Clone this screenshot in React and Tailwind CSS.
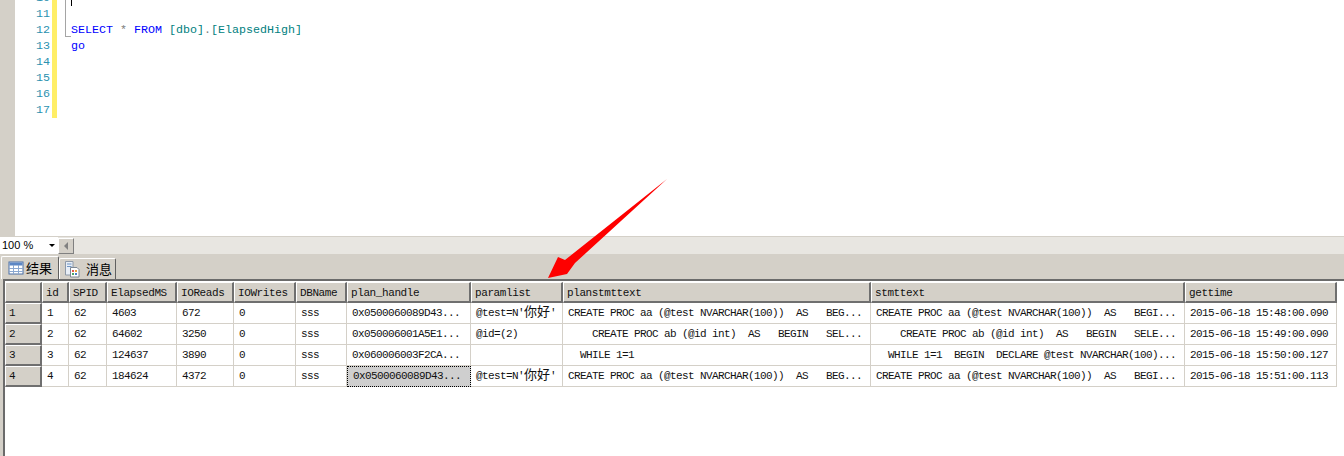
const mono = "font-['Liberation_Mono','Noto_Sans_CJK_SC',monospace]";

const columns = [
  { name: "id", width: "w-[27px]" },
  { name: "SPID", width: "w-[38px]" },
  { name: "ElapsedMS", width: "w-[70px]" },
  { name: "IOReads", width: "w-[57px]" },
  { name: "IOWrites", width: "w-[62px]" },
  { name: "DBName", width: "w-[51px]" },
  { name: "plan_handle", width: "w-[124px]" },
  { name: "paramlist", width: "w-[92px]" },
  { name: "planstmttext", width: "w-[308px]" },
  { name: "stmttext", width: "w-[314px]" },
  { name: "gettime", width: "w-[152px]" },
];

const hello = (
  <>
    @test=N'<span className="text-[13px] tracking-normal leading-none">你好</span>'
  </>
);

const rows = [
  ["1", "62", "4603", "672", "0", "sss", "0x0500060089D43...", hello, "CREATE PROC aa (@test NVARCHAR(100))  AS   BEG...", "CREATE PROC aa (@test NVARCHAR(100))  AS   BEGI...", "2015-06-18 15:48:00.090"],
  ["2", "62", "64602", "3250", "0", "sss", "0x050006001A5E1...", "@id=(2)", "    CREATE PROC ab (@id int)  AS   BEGIN   SEL...", "    CREATE PROC ab (@id int)  AS   BEGIN   SELE...", "2015-06-18 15:49:00.090"],
  ["3", "62", "124637", "3890", "0", "sss", "0x060006003F2CA...", "", "  WHILE 1=1", "  WHILE 1=1  BEGIN  DECLARE @test NVARCHAR(100)...", "2015-06-18 15:50:00.127"],
  ["4", "62", "184624", "4372", "0", "sss", "0x0500060089D43...", hello, "CREATE PROC aa (@test NVARCHAR(100))  AS   BEG...", "CREATE PROC aa (@test NVARCHAR(100))  AS   BEGI...", "2015-06-18 15:51:00.113"],
];

const bevel = "border-t border-l border-r-2 border-b-2 border-t-white border-l-white border-r-[#6f6f6f] border-b-[#6f6f6f] bg-[#d4d0c8]";

function TableIcon() {
  return (
    <svg width="16" height="14" viewBox="0 0 16 14" className="shrink-0">
      <rect x="1" y="1" width="14" height="12" fill="#fff" stroke="#4a6fa5" />
      <rect x="1.5" y="1.5" width="13" height="3" fill="#5b86c4" />
      <path d="M1 7.5H15M1 10.5H15M5.5 4V13M10.5 4V13" stroke="#8aa7d0" fill="none" />
    </svg>
  );
}

function MessageIcon() {
  return (
    <svg width="16" height="18" viewBox="0 0 16 18" className="shrink-0">
      <path d="M1.5 1.5H9V15H1.5Z" fill="#e8eef6" stroke="#8d99a8" />
      <path d="M3 4H7.5M3 6.5H7.5" stroke="#6f95c4" />
      <path d="M6.5 7.5H13L15 9.5V17H6.5Z" fill="#fff" stroke="#7c8794" />
      <rect x="8" y="10" width="2" height="2" fill="#e2574c" />
      <rect x="11" y="10" width="2" height="2" fill="#e9a23b" />
      <rect x="8" y="13" width="2" height="2" fill="#4aa564" />
      <rect x="11" y="13" width="2" height="2" fill="#4c7fc4" />
    </svg>
  );
}

function Editor() {
  const lines = ["10", "11", "12", "13", "14", "15", "16", "17"];
  return (
    <div className="flex h-[236px] bg-white overflow-hidden">
      <div className="w-[15px] bg-[#d4d0c8]" />
      <div className="w-[37px] -mt-[10px] text-right text-[#2b91af] text-[11.67px] leading-[16px]">
        {lines.map((n) => (
          <div key={n} className="pr-[2px]">{n}</div>
        ))}
      </div>
      <div className="w-[5px] h-[118px] bg-[#ffee66]" />
      <div className="relative pl-[14px] pt-[22px] text-[11.67px] leading-[16px] whitespace-pre">
        <div className="absolute left-[8px] top-0 h-[37px] w-[6px] border-l border-b border-[#a5a5a5]" />
        <div className="absolute left-[14px] top-0 h-[6px] w-px bg-black" />
        <div>
          <span className="text-[#0000ff]">SELECT</span>
          <span className="text-[#808080]"> * </span>
          <span className="text-[#0000ff]">FROM</span>
          <span className="text-[#008080]"> [dbo]</span>
          <span className="text-[#808080]">.</span>
          <span className="text-[#008080]">[ElapsedHigh]</span>
        </div>
        <div className="text-[#0000ff]">go</div>
      </div>
    </div>
  );
}

function StatusBar() {
  return (
    <div className="flex h-[18px] items-center bg-[#e8e6e1] border-t border-[#d4d0c8]">
      <div className="flex h-[17px] w-[58px] items-center justify-between bg-white pl-[2px] pr-[3px] text-[11px] font-['Liberation_Sans',sans-serif] text-black">
        <span>100 %</span>
        <span className="border-x-[3px] border-t-[3px] border-x-transparent border-t-black" />
      </div>
      <div className="flex h-[16px] w-[16px] items-center justify-center border border-t-white border-l-white border-r-[#808080] border-b-[#808080] bg-[#d4d0c8]">
        <span className="border-y-[4px] border-r-[4px] border-y-transparent border-r-[#808080]" />
      </div>
    </div>
  );
}

function Tabs() {
  return (
    <div className="flex h-[25px] items-end bg-[#d4d0c8] pl-[1px] font-['Noto_Sans_CJK_SC',sans-serif] text-[13px] text-black">
      <div className="flex h-[23px] w-[58px] items-center gap-[2px] rounded-t-[2px] border border-b-0 border-t-white border-l-white border-r-[#606060] bg-[#d4d0c8] pl-[6px]">
        <TableIcon />
        <span>结果</span>
      </div>
      <div className="flex h-[21px] w-[57px] items-center gap-[6px] rounded-t-[2px] border border-b-0 border-t-white border-l-white border-r-[#606060] bg-[#d4d0c8] pl-[4px]">
        <MessageIcon />
        <span>消息</span>
      </div>
    </div>
  );
}

function Results() {
  return (
    <div className={`flex-1 bg-white ml-[3px] border-l-2 border-t-2 border-[#6b6b6b] pt-px ${mono} text-[11px] tracking-[-0.6px] text-[#111]`}>
      <div className="flex h-[21px]">
        <div className={`w-[37px] shrink-0 ${bevel}`} />
        {columns.map((c) => (
          <div key={c.name} className={`${c.width} shrink-0 ${bevel} pl-[3px] leading-[20px] tracking-[-0.4px]`}>
            {c.name}
          </div>
        ))}
      </div>
      {rows.map((row, r) => (
        <div key={r} className="flex h-[21px]">
          <div className={`flex w-[37px] shrink-0 items-center pl-[3px] ${bevel}`}>
            {r + 1}
          </div>
          {row.map((cell, i) => {
            const current = r === 3 && i === 6;
            return (
              <div
                key={i}
                className={`${columns[i].width} shrink-0 flex items-center whitespace-pre pl-[5px] ${
                  current
                    ? "bg-[#cfcfcf] border border-dotted border-black"
                    : "border-r border-b border-[#d4d0c8]"
                }`}
              >
                <span>{cell}</span>
              </div>
            );
          })}
        </div>
      ))}
    </div>
  );
}

function Arrow() {
  return (
    <svg className="absolute left-[540px] top-[170px]" width="135" height="115" viewBox="540 170 135 115">
      <polygon points="667,179 575,263 567,274 548,278 558,257 565,260" fill="#fe0000" />
    </svg>
  );
}

export default function App() {
  return (
    <div className={`relative flex h-[456px] w-[1344px] flex-col overflow-hidden bg-[#d4d0c8] ${mono}`}>
      <Editor />
      <StatusBar />
      <Tabs />
      <Results />
      <Arrow />
    </div>
  );
}
